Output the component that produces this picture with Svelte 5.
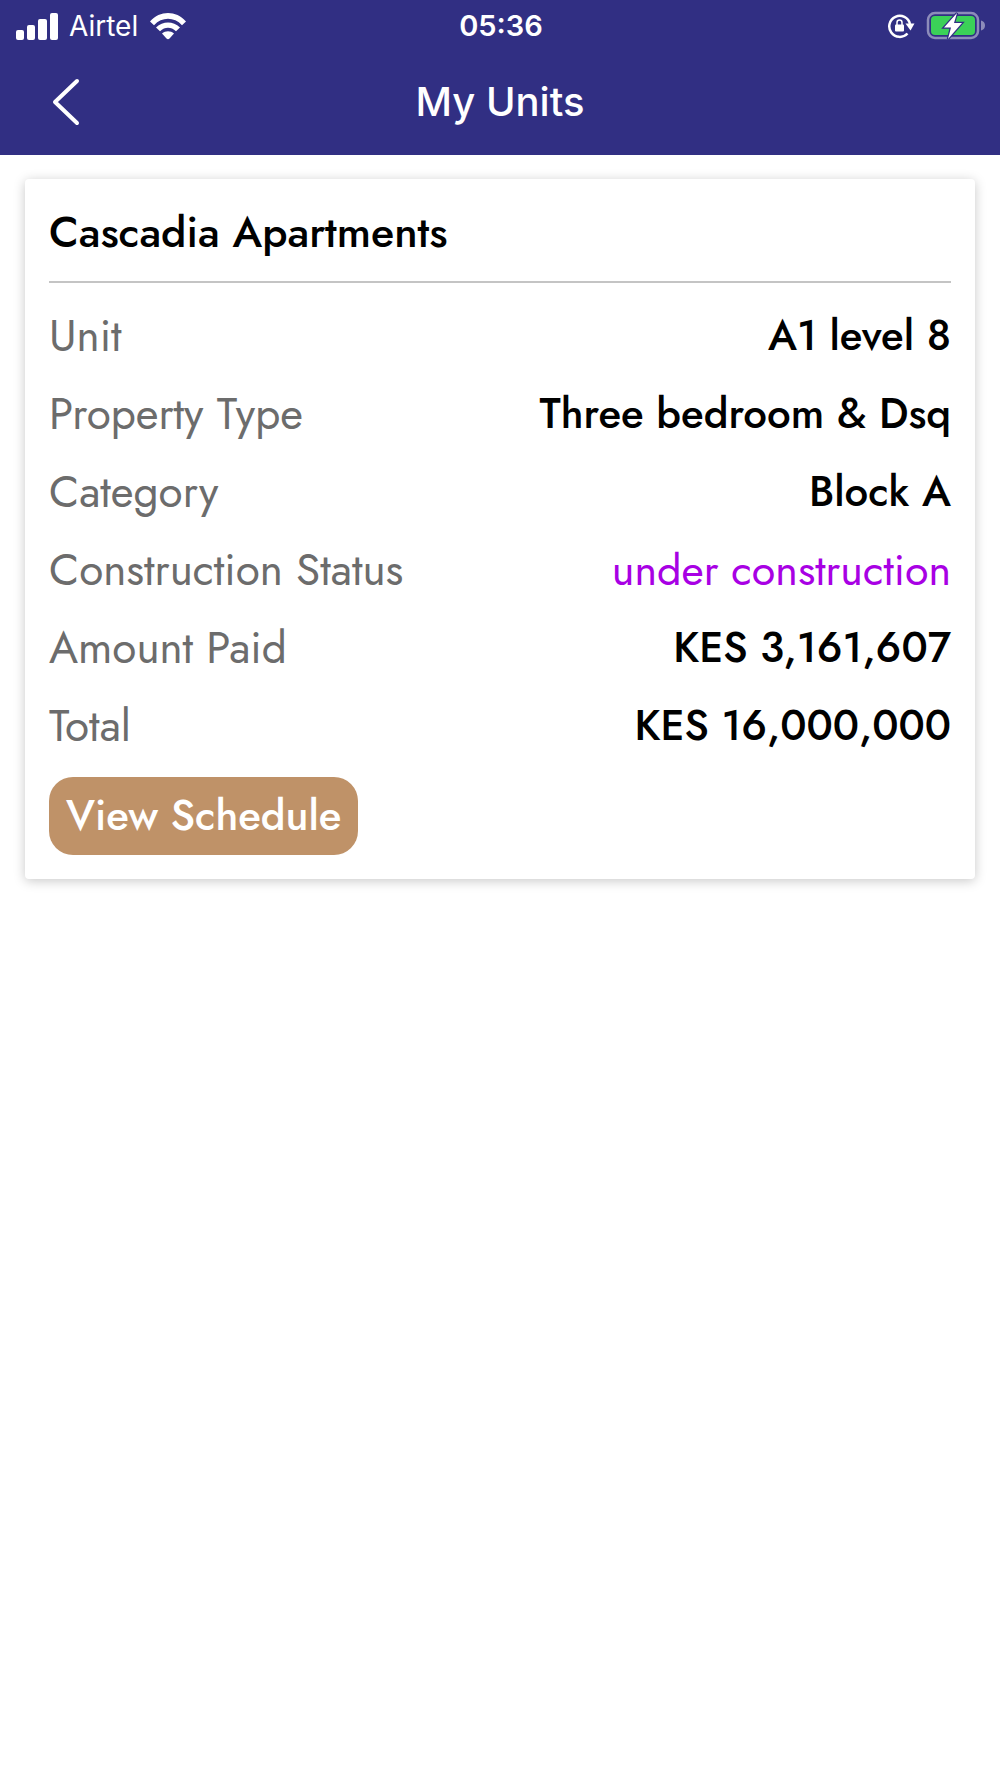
<script>
  const details = [
    { label: 'Unit', value: 'A1 level 8' },
    { label: 'Property Type', value: 'Three bedroom & Dsq' },
    { label: 'Category', value: 'Block A' },
    { label: 'Construction Status', value: 'under construction', status: true },
    { label: 'Amount Paid', value: 'KES 3,161,607' },
    { label: 'Total', value: 'KES 16,000,000' }
  ];
</script>

<header class="top">
  <div class="status">
    <div class="carrier">
      <svg width="42" height="27" viewBox="0 0 42 27" aria-hidden="true">
        <rect x="0" y="17" width="8" height="10" rx="2" />
        <rect x="11" y="12" width="8" height="15" rx="2" />
        <rect x="22" y="6" width="9" height="21" rx="2" />
        <rect x="34" y="0" width="8" height="27" rx="2" />
      </svg>
      <span>Airtel</span>
      <svg width="38" height="28" viewBox="0 0 38 28" aria-hidden="true">
        <path d="M1 9.500C11-1.800 27-1.800 37 9.500L33 13.200C25 4.700 13 4.700 5 13.200Z" />
        <path d="M7 15.500C14 8.700 24 8.700 31 15.500L27 19.300C22 14.700 16 14.700 11 19.300Z" />
        <path d="M13 21.500C16.500 18.500 21.500 18.500 25 21.500L20.500 26.500Q19 28 17.500 26.500Z" />
      </svg>
    </div>
    <time>05:36</time>
    <div class="indicators">
      <svg width="28" height="26" viewBox="0 0 28 26" aria-hidden="true">
        <path d="M20.500 20.500A10.500 10.500 0 1 1 23 11" fill="none" stroke="#fff" stroke-width="2.500" />
        <path d="M18.500 10.500H27.500L23.500 17.500Z" />
        <rect x="8" y="11.500" width="9" height="7" rx="1" />
        <path d="M10 12V9.500a2.500 2.500 0 0 1 5 0V12" fill="none" stroke="#fff" stroke-width="1.500" />
      </svg>
      <svg width="60" height="30" viewBox="0 0 60 30" aria-hidden="true">
        <rect x="2" y="2" width="50" height="25" rx="7" fill="none" stroke="#8d8cba" stroke-width="2.500" />
        <rect x="5" y="5" width="44" height="19" rx="4" fill="#3bd158" />
        <path d="M55 9.500Q59 10.500 59 14.500T55 19.500Z" fill="#8d8cba" />
        <path d="M31 2L18 16.500H25L22 28L36 12H28Z" stroke="#312f83" stroke-width="2.500" paint-order="stroke" />
      </svg>
    </div>
  </div>
  <nav class="bar" aria-label="Page">
    <button class="back" aria-label="Back">
      <svg width="28" height="48" viewBox="0 0 28 48" aria-hidden="true">
        <path d="M25 3L3 24L25 45" fill="none" stroke="#fff" stroke-width="4" stroke-linecap="round" stroke-linejoin="round" />
      </svg>
    </button>
    <h1>My Units</h1>
  </nav>
</header>

<main>
  <article class="card">
    <h2>Cascadia Apartments</h2>
    <dl>
      {#each details as item}
        <div class="row">
          <dt>{item.label}</dt>
          <dd class:pending={item.status}>{item.value}</dd>
        </div>
      {/each}
    </dl>
    <button class="schedule">View Schedule</button>
  </article>
</main>

<style>
  :global(body) {
    margin: 0;
    background: #fff;
  }

  .top {
    background: #312f83;
    color: #fff;
    font-family: Inter, 'Liberation Sans', sans-serif;
    padding-bottom: 3px;
  }

  svg {
    display: block;
    fill: #fff;
  }

  .status,
  .bar {
    display: grid;
    grid-template-columns: 1fr auto 1fr;
    align-items: center;
  }

  .status {
    height: 52px;
    padding: 0 14px 0 16px;
    font-size: 29px;
    line-height: 36px;
  }

  .carrier,
  .indicators {
    display: flex;
    align-items: center;
    gap: 11px;
  }

  .indicators {
    justify-content: flex-end;
  }

  .carrier {
    font-size: 28px;
  }

  time {
    font-weight: 600;
  }

  .bar {
    height: 100px;
    padding: 0 40px;
  }

  .back {
    justify-self: start;
    padding: 12px;
    border: 0;
    background: none;
    cursor: pointer;
  }

  h1 {
    margin: 0;
    font-size: 40px;
    line-height: 48px;
    font-weight: 500;
  }

  main {
    padding: 24px 25px;
    font-family: Jost, Futura, Lato, sans-serif;
    font-size: 42px;
    font-weight: 500;
    line-height: 54px;
  }

  .card {
    padding: 0 24px 24px;
    border-radius: 4px;
    background: #fff;
    box-shadow: 0 2px 12px rgba(0, 0, 0, 0.22);
  }

  h2 {
    margin: 0;
    padding: 26px 0 22px;
    border-bottom: 2px solid #c4c4c4;
    font-size: 43px;
    font-weight: 500;
    color: #000;
  }

  dl {
    margin: 14px 0 12px;
  }

  .row {
    display: flex;
    justify-content: space-between;
    gap: 24px;
    padding: 12px 0;
  }

  dt {
    font-size: 44px;
    font-weight: 400;
    color: #6c6c6c;
  }

  dd {
    margin: 0;
    text-align: right;
    color: #000;
  }

  .pending {
    font-size: 43px;
    font-weight: 400;
    color: #a800e4;
  }

  .schedule {
    display: block;
    padding: 12px 17px;
    border: 0;
    border-radius: 24px;
    background: #bf9268;
    color: #fff;
    font: inherit;
    cursor: pointer;
  }
</style>
